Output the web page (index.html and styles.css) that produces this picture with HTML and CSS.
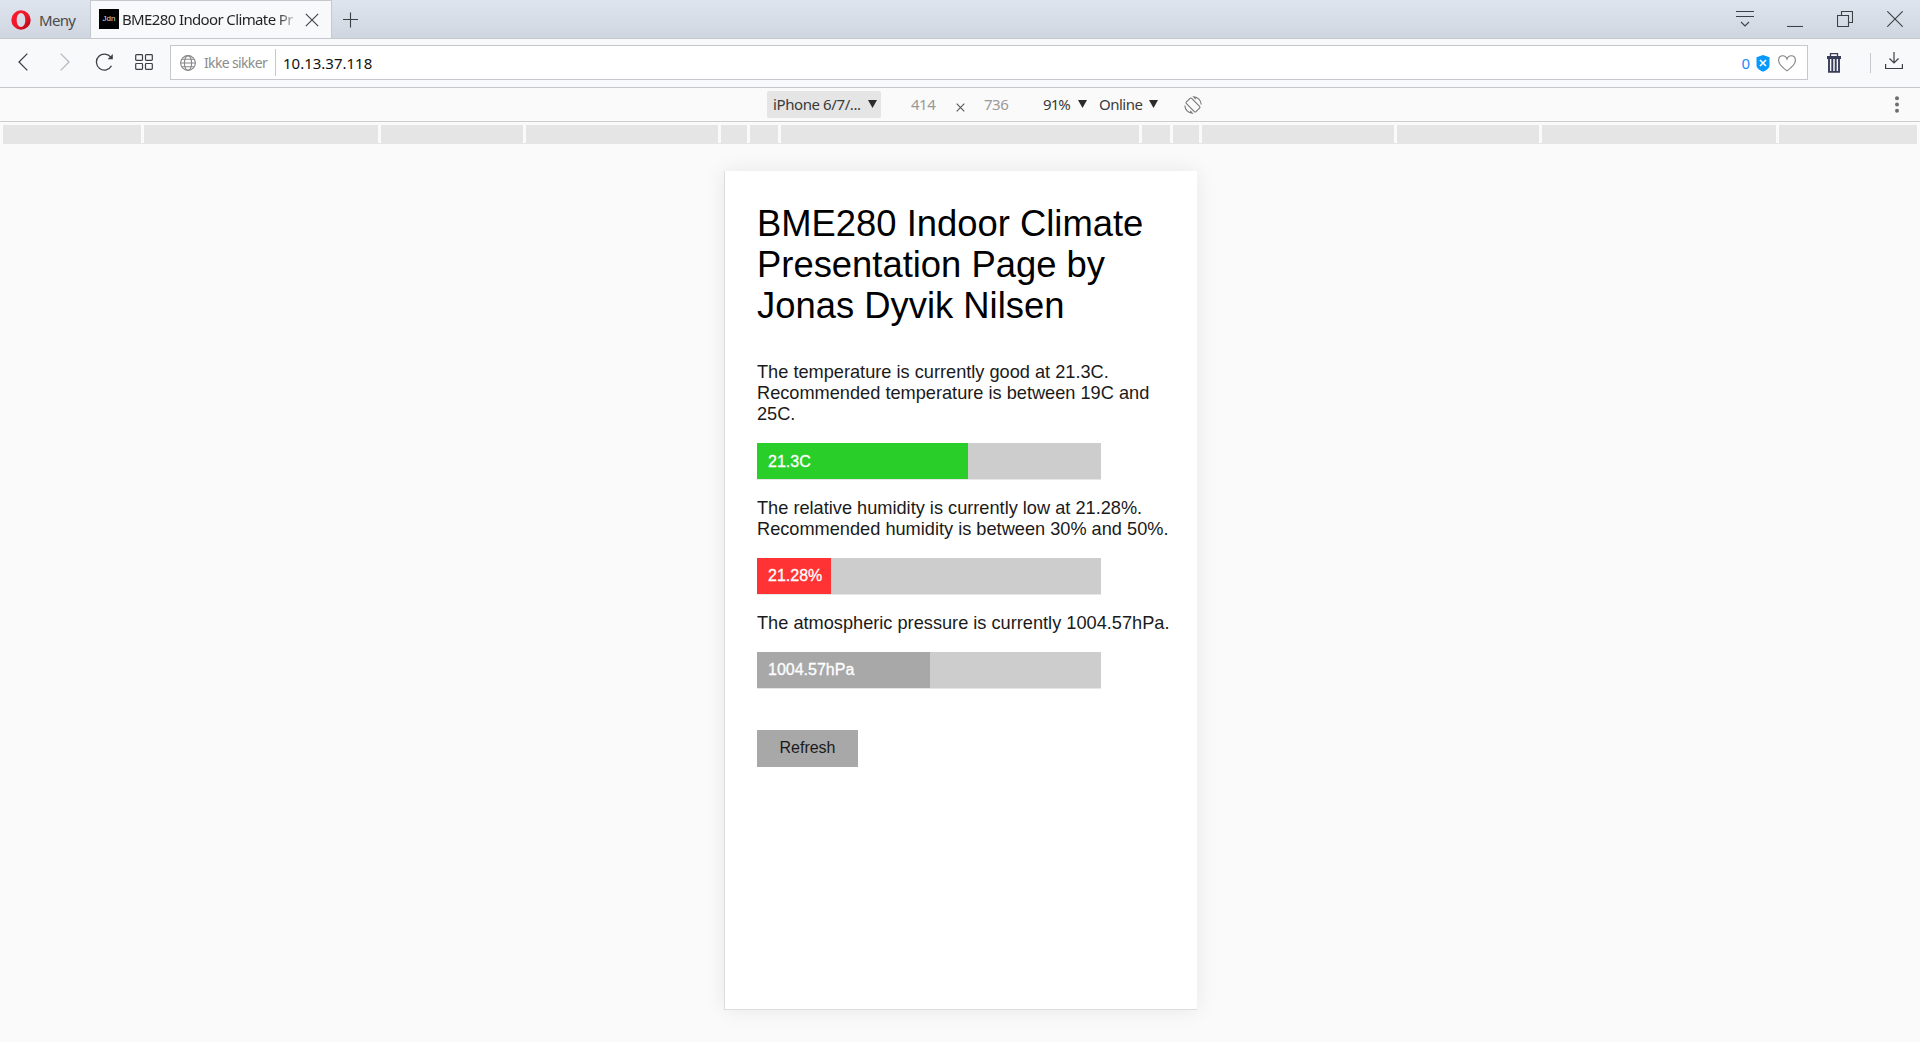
FILE: index.html
```html
<!DOCTYPE html>
<html lang="no">
<head>
<meta charset="utf-8">
<title>BME280 Indoor Climate Presentation Page</title>
<link rel="stylesheet" href="styles.css">
</head>
<body>
<header class="tabs">
  <div class="menu">
    <svg class="opera" width="20" height="20" viewBox="0 0 20 20"><defs><linearGradient id="red" x1="0" x2="1" y1="0" y2="1"><stop offset="0" stop-color="#ff1b2d"/><stop offset=".55" stop-color="#ee1629"/><stop offset="1" stop-color="#a70014"/></linearGradient></defs><path fill="url(#red)" fill-rule="evenodd" d="M10 .3a9.7 9.7 0 1 0 0 19.4A9.7 9.7 0 0 0 10 .3M10 3c2.6 0 4.3 3 4.3 7s-1.700 7-4.300 7-4.300-3-4.300-7S7.400 3 10 3"/></svg>
    <span class="menu-label">Meny</span>
  </div>
  <div class="tab">
    <span class="favicon">Jdn</span>
    <span class="tab-title">BME280 Indoor Climate Pr</span>
    <svg class="tab-close" width="14" height="14" viewBox="0 0 14 14"><path d="M.8.8l12.400 12.400M13.200.8L.8 13.200"/></svg>
  </div>
  <svg class="plus" width="16" height="16" viewBox="0 0 16 16"><path d="M7.500 .5v15M0 7.500h15"/></svg>
  <div class="window">
    <svg width="18" height="16" viewBox="0 0 18 16"><path d="M0 .5h18M0 5.500h18M5 11l4 4 4-4"/></svg>
    <svg width="16" height="16" viewBox="0 0 16 16"><path d="M0 15.500h16"/></svg>
    <svg width="16" height="16" viewBox="0 0 16 16"><path d="M.5 4.500h11v11H.5zM4.500 4.500v-4h11v11h-4"/></svg>
    <svg width="16" height="16" viewBox="0 0 16 16"><path d="M.3.3l15.400 15.400M15.700.3L.3 15.700"/></svg>
  </div>
</header>
<nav class="toolbar">
  <svg class="back" width="10" height="18" viewBox="0 0 10 18"><path d="M9.300.6L1 9l8.300 8.400"/></svg>
  <svg class="forward" width="10" height="18" viewBox="0 0 10 18"><path d="M.7.6L9 9 .7 17.400"/></svg>
  <svg class="reload" width="20" height="18" viewBox="0 0 20 18"><path d="M16.500 12.800A8 8 0 1 1 16 4.500"/><path class="solid" d="M17.800 1v5.200h-5.200z"/></svg>
  <svg class="grid" width="18" height="16" viewBox="0 0 18 16"><path d="M1.500.6h5.200q.8 0 .8.800v4.200q0 .8-.8.800H1.500q-.8 0-.8-.800V1.400q0-.8.8-.8zM11.300.6h5.200q.8 0 .8.800v4.200q0 .8-.8.800h-5.200q-.8 0-.8-.800V1.400q0-.8.8-.8zM1.500 9.500h5.200q.8 0 .8.800v4.200q0 .8-.8.800H1.500q-.8 0-.8-.800v-4.200q0-.8.8-.800zM11.300 9.500h5.200q.8 0 .8.800v4.200q0 .8-.8.800h-5.200q-.8 0-.8-.800v-4.200q0-.8.8-.800z"/></svg>
  <div class="address">
    <svg class="globe" width="16" height="16" viewBox="0 0 16 16"><circle cx="8" cy="8" r="7.400"/><ellipse cx="8" cy="8" rx="3.600" ry="7.400"/><path d="M.6 8h14.800M1.800 4.200h12.400M1.800 11.800h12.400"/></svg>
    <span class="security">Ikke sikker</span>
    <span class="url">10.13.37.118</span>
    <span class="count">0</span>
    <svg class="shield" width="14" height="17" viewBox="0 0 14 17"><path fill="#0899ff" d="M7 0l6.500 2.200v8.800Q13 14 7 16.800 1 14 .5 11V2.200z"/><path stroke="#fff" stroke-width="1.600" d="M4 5l6 6M10 5l-6 6"/></svg>
    <svg class="heart" width="18" height="17" viewBox="0 0 18 17"><path d="M9 15.900C3.500 12 .6 9 .6 5.300.6 2.600 2.400.7 4.800.7 6.800.7 8.300 2 9 4.100 9.700 2 11.200.7 13.200.7c2.400 0 4.200 1.900 4.200 4.600C17.400 9 14.500 12 9 15.900z"/></svg>
  </div>
  <svg class="trash" width="14" height="20" viewBox="0 0 14 20"><path fill="#383d58" d="M0 3h14v3H0z"/><path stroke="#383d58" stroke-width="1.300" fill="none" d="M3.500 3V.7h7V3"/><path stroke="#383d58" stroke-width="1.900" fill="none" d="M2 5v13.900h10V5M5.300 5v14M8.700 5v14"/></svg>
  <span class="rule"></span>
  <svg class="download" width="18" height="18" viewBox="0 0 18 18"><path d="M.6 12v4.500h16.800V12M9 0v11M4.500 6.500L9 11l4.500-4.500"/></svg>
</nav>
<section class="device">
  <div class="model"><span>iPhone 6/7/...</span><i class="arrow"></i></div>
  <span class="width">414</span>
  <svg class="times" width="9" height="9" viewBox="0 0 9 9"><path d="M.7.7l7.600 7.600M8.300.7L.7 8.300"/></svg>
  <span class="height">736</span>
  <span class="scale">91%</span><i class="arrow"></i>
  <span class="network">Online</span><i class="arrow"></i>
  <svg class="rotate" width="18" height="18" viewBox="0 0 18 18"><rect x="5.300" y="2.200" width="7.400" height="13.600" rx="1.200" transform="rotate(-45 9 9)"/><path d="M.8 9.500a8.300 8.300 0 0 0 7.500 7.800l-2-2.500M17.200 8.500A8.300 8.300 0 0 0 9.700.7l2 2.500"/></svg>
  <svg class="kebab" width="4" height="17" viewBox="0 0 4 17"><circle cx="2" cy="2.200" r="2"/><circle cx="2" cy="8.500" r="2"/><circle cx="2" cy="14.800" r="2"/></svg>
</section>
<div class="ruler"><i></i><i></i><i></i><i></i><i></i><i></i><i></i><i></i><i></i><i></i><i></i><i></i><i></i></div>
<main class="stage">
  <article class="screen">
    <h1>BME280 Indoor Climate<br>Presentation Page by<br>Jonas Dyvik Nilsen</h1>
    <p class="reading">The temperature is currently good at 21.3C.<br>Recommended temperature is between 19C and<br>25C.</p>
    <div class="track"><div class="fill good" style="width:211px">21.3C</div></div>
    <p class="reading">The relative humidity is currently low at 21.28%.<br>Recommended humidity is between 30% and 50%.</p>
    <div class="track"><div class="fill bad" style="width:74px">21.28%</div></div>
    <p class="reading">The atmospheric pressure is currently 1004.57hPa.</p>
    <div class="track"><div class="fill neutral" style="width:173px">1004.57hPa</div></div>
    <button class="refresh">Refresh</button>
  </article>
</main>
</body>
</html>
```
FILE: styles.css
```css
* { box-sizing: border-box; }
body {
  margin: 0;
  height: 1042px;
  overflow: hidden;
  display: flex;
  flex-direction: column;
  background: #fafafa;
  font: 15px/20px "Noto Sans", sans-serif;
  color: #3a3a3a;
}
svg { display: block; flex: none; fill: none; stroke: #3c3f44; stroke-width: 1.1; }
span { white-space: nowrap; flex: none; }

.tabs {
  display: flex;
  height: 39px;
  flex: none;
  border-bottom: 1px solid #c5c8cc;
  background: linear-gradient(#dee5ee, #d0d6e0);
}
.menu { display: flex; width: 90px; padding: 10px 0 0 11px; }
.menu .opera { stroke: none; }
.menu-label { margin-left: 8px; color: #4a4a4a; letter-spacing: -0.7px; }
.tab {
  display: flex;
  width: 242px;
  height: 38px;
  padding: 8px 0 0 8px;
  border: 1px solid #c5c8cc;
  border-width: 1px 1px 0;
  background: #f8f9fb;
}
.favicon {
  width: 20px;
  height: 20px;
  background: #000;
  color: #ddd;
  font: 8px/20px "Liberation Sans", sans-serif;
  text-align: center;
}
.tab-title {
  width: 178px;
  margin-left: 3px;
  letter-spacing: -0.63px;
  background: linear-gradient(90deg, #222 155px, transparent 177px);
  background-clip: text;
  color: transparent;
}
.tab-close { margin: 4px 0 0 5px; }
.plus { margin: 12px 0 0 11px; }
.window { display: flex; gap: 34px; margin: 11px 17px 0 auto; }
.window svg:first-child { margin-right: -1px; }

.toolbar {
  display: flex;
  height: 49px;
  flex: none;
  padding-top: 6px;
  border-bottom: 1px solid #c5c8cc;
  background: #f8f9fb;
}
.toolbar > svg { margin-top: 8px; }
.toolbar .back { margin-left: 18px; stroke-width: 1.3; }
.toolbar .forward { margin-left: 32px; stroke: #b5b8bc; stroke-width: 1.3; }
.toolbar .reload { margin-left: 25px; stroke-width: 1.3; }
.reload .solid { fill: #3c3f44; stroke: none; }
.toolbar .grid { margin: 9px 0 0 20px; stroke-width: 1.2; }
.address {
  display: flex;
  width: 1638px;
  height: 35px;
  margin-left: 17px;
  padding-top: 3px;
  border: 1px solid #c5c8cc;
  background: #fff;
}
.address .globe { margin: 6px 0 0 9px; stroke: #888; stroke-width: 1.1; }
.security {
  width: 72px;
  height: 27px;
  margin-left: 8px;
  padding-top: 4px;
  border-right: 1px solid #c5c8cc;
  color: #8c8c8c;
  font-size: 14px;
  letter-spacing: -0.65px;
}
.url { margin: 4px 0 0 7px; color: #111; }
.count { margin: 4px 6px 0 auto; color: #1687ff; }
.address .shield { margin-top: 6px; stroke: none; }
.address .heart { margin: 6px 11px 0 8px; stroke: #808286; }
.toolbar .trash { margin-left: 19px; stroke: none; }
.rule { width: 1px; height: 20px; margin: 8px 0 0 29px; background: #c5c8cc; }
.toolbar .download { margin-left: 14px; margin-top: 7px; stroke-width: 1.2; }

.device {
  display: flex;
  height: 34px;
  flex: none;
  padding: 3px 0 0 767px;
  border-bottom: 1px solid #ccc;
}
.device > span { margin-top: 3px; }
.model {
  display: flex;
  width: 114px;
  height: 27px;
  padding: 3px 0 0 6px;
  border-radius: 2px;
  background: #e5e5e5;
}
.model span { width: 95px; letter-spacing: -0.4px; }
.arrow {
  flex: none;
  width: 9px;
  height: 8px;
  margin-top: 9px;
  background: #2b2b2b;
  clip-path: polygon(0 0, 100% 0, 50% 100%);
}
.model .arrow { margin: 6px 0 0; }
.width { width: 45px; margin-left: 30px; color: #999; letter-spacing: -0.5px; }
.times { margin-top: 12px; stroke: #555; }
.height { width: 59px; margin-left: 19px; color: #999; letter-spacing: -0.5px; }
.scale { width: 35px; letter-spacing: -0.9px; }
.network { width: 50px; margin-left: 12px; letter-spacing: -0.5px; }
.rotate { margin: 5px 0 0 26px; stroke: #777; }
.kebab { margin: 5px 21px 0 auto; fill: #6e6e6e; stroke: none; }

.ruler {
  display: grid;
  grid-template-columns: 138px 234px 142px 192px 26px 28px 358px 28px 26px 192px 142px 234px 138px;
  column-gap: 3px;
  height: 19px;
  flex: none;
  margin: 3px 3px 0;
  border-bottom: 1px solid #e5e5e5;
}
.ruler i { background: #e5e5e5; }

.stage { padding: 27px 0 0 724px; }
.screen {
  display: flex;
  flex-direction: column;
  align-items: flex-start;
  width: 473px;
  height: 839px;
  padding: 32px 0 0 32px;
  border: solid #ddd;
  border-width: 0 0 1px 1px;
  background: #fff;
  box-shadow: 0 0 20px rgba(0, 0, 0, 0.08);
  font-family: "Liberation Sans", Arial, sans-serif;
}
.screen h1 {
  margin: 0 0 36px;
  color: #000;
  font-size: 36.4px;
  font-weight: 400;
  line-height: 41px;
  white-space: nowrap;
}
.reading {
  margin: 0 0 18px;
  color: #1a1a1a;
  font-size: 18.2px;
  line-height: 21px;
  white-space: nowrap;
}
.track {
  width: 344px;
  height: 36px;
  margin-bottom: 19px;
  background: #cdcdcd;
  box-shadow: 0 1px #e6e6e6;
}
.fill {
  height: 36px;
  padding-left: 11px;
  color: #fff;
  font-size: 16px;
  line-height: 35px;
  -webkit-text-stroke: 0.3px #fff;
}
.good { background: #29ce29; line-height: 37px; }
.bad { background: #f33; }
.neutral { background: #a8a8a8; }
.refresh {
  width: 101px;
  height: 37px;
  margin-top: 23px;
  padding: 0 0 2px;
  border: 0;
  background: #a8a8a8;
  color: #1a1a1a;
  font: 16px/35px "Liberation Sans", Arial, sans-serif;
}
```
